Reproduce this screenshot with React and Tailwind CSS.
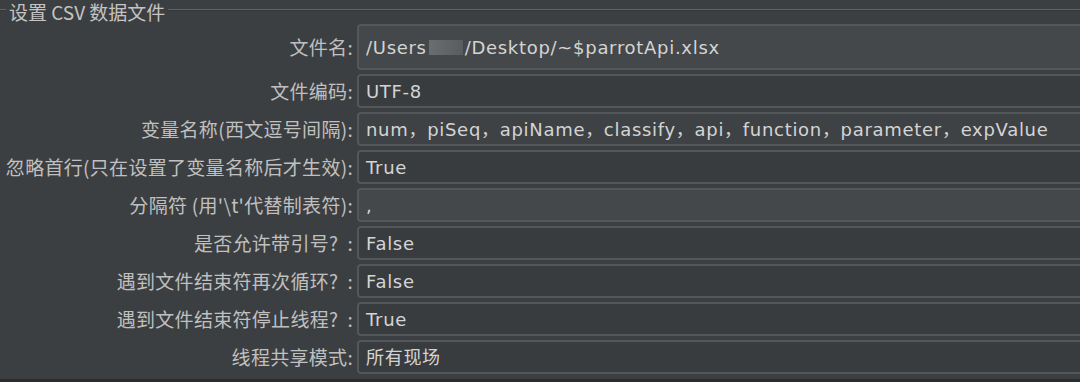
export default function App() {
  const cjk = { fontFamily: '"Noto Sans CJK SC", "Noto Sans", sans-serif' };
  const rows = [
    { label: "文件名:", value: "path", h: "h-[46px]", bg: "bg-[#45484a]" },
    { label: "文件编码:", value: "UTF-8", bg: "bg-[#393c3e]" },
    { label: "变量名称(西文逗号间隔):", value: "num，piSeq，apiName，classify，api，function，parameter，expValue", bg: "bg-[#3f4244]" },
    { label: "忽略首行(只在设置了变量名称后才生效):", value: "True", bg: "bg-[#393c3e]" },
    { label: "分隔符 (用'\\t'代替制表符):", value: ",", bg: "bg-[#45484a]" },
    { label: "是否允许带引号?  :", value: "False", bg: "bg-[#393c3e]" },
    { label: "遇到文件结束符再次循环?  :", value: "False", bg: "bg-[#393c3e]" },
    { label: "遇到文件结束符停止线程?  :", value: "True", bg: "bg-[#393c3e]" },
    { label: "线程共享模式:", value: "所有现场", bg: "bg-[#393c3e]" },
  ];
  return (
    <div className="w-[1080px] h-[382px] bg-[#3c3f41] overflow-hidden flex flex-col" style={cjk}>
      <div className="flex items-start h-[24px] pt-[1px]">
        <div className="w-[6px] h-[2px] mt-[8px] border-t border-[#606366] bg-[#35383a]" />
        <div className="px-[3px] text-[19px] leading-[22px] text-[#c4c4c4]">设置 CSV 数据文件</div>
        <div className="flex-1 h-[2px] mt-[8px] border-t border-[#606366] bg-[#35383a]" />
      </div>
      <div className="flex flex-col gap-[4px]">
        {rows.map((r, i) => (
          <div key={i} className={`flex items-center ${r.h || "h-[34px]"}`}>
            <div className="w-[357px] shrink-0 text-right pr-[4px] text-[19px] text-[#c0c0c0] whitespace-pre tracking-[0.3px]">
              {r.label}
            </div>
            <div
              className={`flex-1 h-full -mr-[10px] rounded-[4px] border-2 border-[#54575a] ${r.bg} flex items-center pl-[7px] text-[18px] text-[#d4d4d4] whitespace-nowrap tracking-[0.7px]`}
              style={{ fontFamily: '"DejaVu Sans", "Noto Sans CJK SC", sans-serif' }}
            >
              {r.value === "path" ? (
                <span className="flex items-center">
                  /Users
                  <span className="inline-block w-[34px] h-[15px] mx-[2px] bg-gradient-to-r from-[#6f7274] to-[#5c5f61] opacity-90" />
                  /Desktop/~$parrotApi.xlsx
                </span>
              ) : (
                r.value
              )}
            </div>
          </div>
        ))}
      </div>
      <div className="flex-1" />
      <div className="h-[3px] bg-[#2a2c2e]" />
    </div>
  );
}
